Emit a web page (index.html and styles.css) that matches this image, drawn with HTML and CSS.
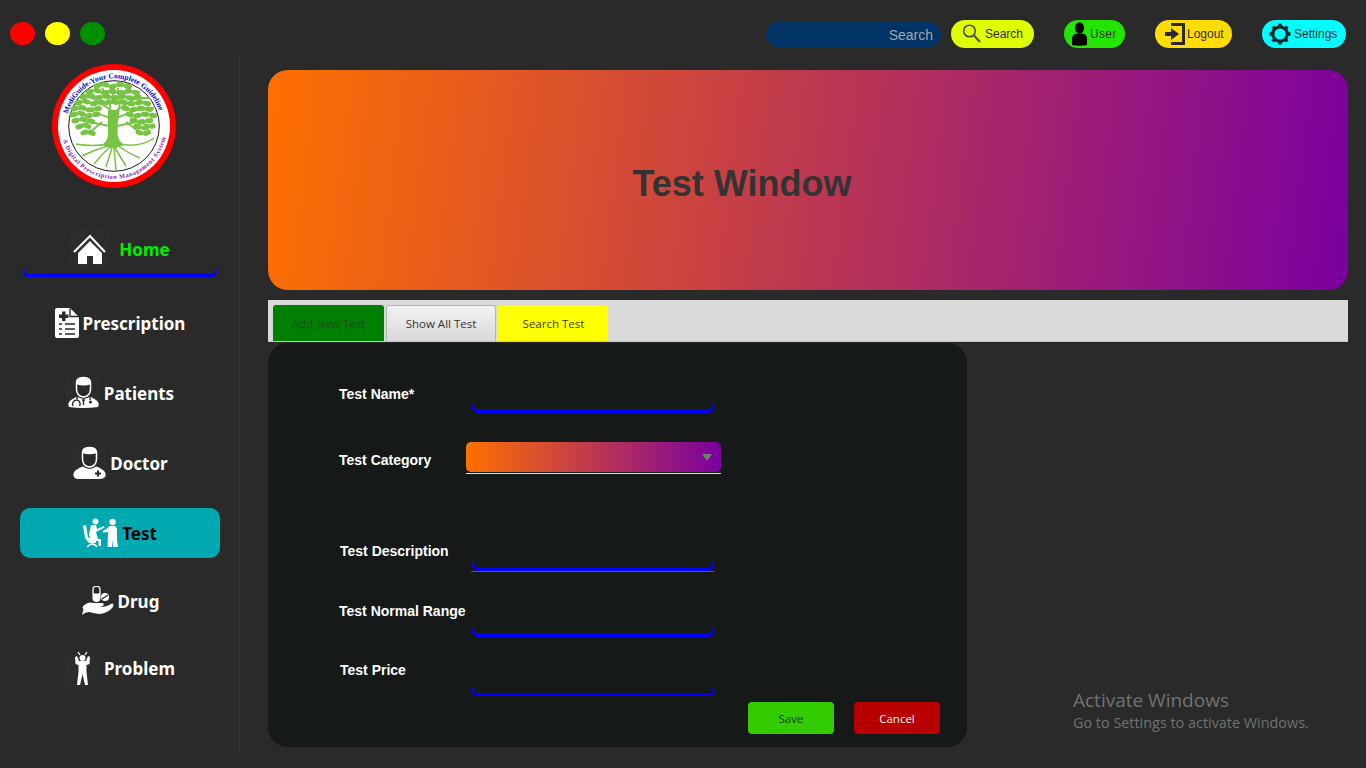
FILE: index.html
```html
<!DOCTYPE html>
<html lang="en">
<head>
<meta charset="utf-8">
<title>Test Window</title>
<link rel="stylesheet" href="styles.css">
</head>
<body>
<div class="app">
  <header class="topbar">
    <div class="lights">
      <span class="light light-red"></span>
      <span class="light light-yellow"></span>
      <span class="light light-green"></span>
    </div>
    <div class="tools">
      <input class="search-input" type="text" placeholder="Search">
      <button class="tool tool-search">
        <svg class="tool-icon" width="20" height="22" viewBox="0 0 20 22"><circle cx="7.500" cy="8" r="5.800" fill="none" stroke="#444" stroke-width="1.500"/><path d="M12 12.500L18 19" stroke="#555" stroke-width="2.200"/></svg>
        <span>Search</span>
      </button>
      <button class="tool tool-user">
        <svg class="tool-icon" width="17" height="24" viewBox="0 0 17 24"><ellipse cx="8.500" cy="6" rx="4.600" ry="5.800" fill="#000"/><path d="M1 23V17Q1 12 6 11.500H11Q16 12 16 17V23Q8.500 24.500 1 23Z" fill="#000"/></svg>
        <span>User</span>
      </button>
      <button class="tool tool-logout">
        <svg class="tool-icon" width="22" height="24" viewBox="0 0 22 24"><path d="M6 1H20V23H6V20H17V4H6Z" fill="#2a2a2a"/><path d="M0 10H6V6L14 12L6 18V14H0Z" fill="#2a2a2a"/></svg>
        <span>Logout</span>
      </button>
      <button class="tool tool-settings">
        <svg class="tool-icon" width="22" height="24" viewBox="0 0 22 24"><circle cx="11" cy="12" r="7.200" fill="none" stroke="#14282c" stroke-width="3.200"/><path d="M11 1.500V5M11 19V22.500M0.500 12H4M18 12H21.500M3.600 4.600L6 7M18.400 4.600L16 7M3.600 19.400L6 17M18.400 19.400L16 17" stroke="#14282c" stroke-width="3.400"/></svg>
        <span>Settings</span>
      </button>
    </div>
  </header>

  <div class="body-row">
    <aside class="sidebar">
      <svg class="logo" width="124" height="124" viewBox="0 0 124 124">
        <defs>
          <path id="arcTop" d="M16 50A47.500 47.500 0 0 1 108 50"/>
          <path id="arcBottom" d="M11 76A52.900 52.900 0 0 0 113 76"/>
        </defs>
        <circle cx="62" cy="62" r="62" fill="#ff0000"/>
        <circle cx="62" cy="62" r="56" fill="#ffffff"/>
        <circle cx="62" cy="62" r="45.300" fill="#ffffff" stroke="#000" stroke-width="0.900"/>
        <text class="logo-top"><textPath href="#arcTop" textLength="122" lengthAdjust="spacing">MediGuide-Your Complete Guideline</textPath></text>
        <text class="logo-bottom"><textPath href="#arcBottom" textLength="140" lengthAdjust="spacing">A Digital Prescription Management System</textPath></text>
        <path class="tree-wood" d="M56 46H66L65.500 70Q66 77 72 81L64 84H59L50 81Q56 77 56 70Z"/>
        <g class="tree-branch">
          <path d="M59 56L58 38L50 24M59 46L40 34L28 32M58 54L36 46L22 44M57 62L38 58L26 62M65 58L68 38L76 24M65 46L84 34L98 34M65 54L84 46L102 44M65 62L84 58L100 62M60 40L62 20M67 40L66 24M50 58L36 70M74 58L90 70"/>
        </g>
        <g class="tree-root">
          <path d="M56 80Q40 83 24 80M56 82Q42 86 30 92M58 83Q50 90 42 100M60 84L54 103M62 84L64 106M63 84L74 102M66 82Q78 90 88 94M68 80Q88 84 102 74"/>
        </g>
        <g class="tree-leaf">
          <path d="M44 22L52 20L60 23L68 20L78 23"/>
          <path d="M36 28L44 26L52 29L60 27L68 29L76 27L86 29"/>
          <path d="M30 33L38 31L46 34L54 32L62 34L70 32L78 34L92 33"/>
          <path d="M25 39L33 37L41 40L50 38M54 39L60 37L66 39M70 38L80 40L88 38L98 40"/>
          <path d="M21 45L29 43L37 46L50 44M72 44L80 46L88 44L102 46"/>
          <path d="M20 51L28 49L36 52L46 50M76 50L84 52L92 50L104 52"/>
          <path d="M22 57L30 55L42 58M80 56L88 58L102 56"/>
          <path d="M26 63L33 61L40 64M84 62L92 64L101 62"/>
          <path d="M31 69L36 67L42 70M86 68L92 70L97 68"/>
        </g>
      </svg>

      <nav class="nav">
        <a class="nav-item nav-home">
          <svg class="nav-icon hatch" width="40" height="40" viewBox="0 0 40 40"><path class="ic" d="M8 24L20 12L32 24V35H23V27H17V35H8Z"/><path class="ic-line" d="M4 23L20 7L35 23"/></svg>
          <span class="nav-label">Home</span>
        </a>
        <a class="nav-item">
          <svg class="nav-icon" width="24" height="30" viewBox="0 0 24 30"><path class="ic" d="M2 0H15L24 9V28A2 2 0 0 1 22 30H2A2 2 0 0 1 0 28V2A2 2 0 0 1 2 0Z"/><path class="ic-cut" d="M4 6.500H7V3.500H10.500V6.500H13.500V10H10.500V13H7V10H4Z"/><path class="ic-cut-line" d="M15 0.500V8.500H24M4 16H7M4 21H7M4 26H7M10 16H20M10 21H20M10 26H20"/></svg>
          <span class="nav-label">Prescription</span>
        </a>
        <a class="nav-item">
          <svg class="nav-icon hatch" width="34" height="34" viewBox="0 0 34 34"><path class="ic" d="M3 31Q1 27 5 24Q9 21 14 19.500H21Q26 21 30 24Q34 27 32 31Q17.500 33 3 31Z"/><path class="ic-cut-line ic-neck" d="M10.500 19.500Q17.500 25 24.500 19.500"/><path class="ic-face" d="M10.500 7Q10.500 1.500 17.500 1.500Q24.500 1.500 24.500 7V13Q24.500 20 17.500 21Q10.500 20 10.500 13Z"/><path class="ic" d="M10 8Q10 1 17.500 1Q25 1 25 8Q17.500 11 10 8Z"/><path class="ic-cut-line" d="M11 21V24M7 30Q5.500 27.500 8.500 24.500Q11 23.500 13 25Q15 27.500 13.500 30M24 21V24M17.500 23.500V29M16 24H19"/><circle class="ic-cut" cx="24.500" cy="26" r="1.500"/></svg>
          <span class="nav-label">Patients</span>
        </a>
        <a class="nav-item">
          <svg class="nav-icon hatch" width="34" height="34" viewBox="0 0 34 34"><path class="ic" d="M2 31Q0 27 4 24Q8 21 13 19.500H22Q27 21 31 24Q35 27 33 31Q31 33 28 33H6Q3 33 2 31Z"/><path class="ic-cut-line ic-neck" d="M10.500 19.500Q17.500 25 24.500 19.500"/><path class="ic-face" d="M10.500 7Q10.500 1.500 17.500 1.500Q24.500 1.500 24.500 7V13Q24.500 20 17.500 21Q10.500 20 10.500 13Z"/><path class="ic" d="M10 7Q10 1 17.500 1Q25 1 25 7Q17.500 9.500 10 7Z"/><path class="ic-cut" d="M23 26.500H25V24.500H27V26.500H29V28.500H27V30.500H25V28.500H23Z"/></svg>
          <span class="nav-label">Doctor</span>
        </a>
        <a class="nav-item nav-active">
          <svg class="nav-icon" width="36" height="30" viewBox="0 0 36 30"><circle class="ic" cx="12.500" cy="3.500" r="3"/><path class="ic" d="M8 7L13 7L14 11L21 8L21.500 9.500L13 14L15 21H18V28H15.500V23H8L6 16Z"/><path class="ic" d="M0 8L3 7L5 19L13 23V25H6L2 20Z"/><path class="ic-line-thin" d="M4 29Q7 26 9 26Q12 26 14 29M9 24V27"/><circle class="ic" cx="29.500" cy="4" r="3.200"/><path class="ic" d="M26 8H32Q34 9 34 12V22L35 29H30L29.500 21L29 29H24.500L25 14L20 14.500L19.500 13L25 10Z"/></svg>
          <span class="nav-label">Test</span>
        </a>
        <a class="nav-item">
          <svg class="nav-icon" width="33" height="30" viewBox="0 0 33 30"><path class="ic-line-thin" d="M12 8V3.500A3.500 3.500 0 0 1 19 3.500V8"/><path class="ic" d="M11.500 7.500H19.500V12A4 4 0 0 1 11.500 12Z"/><circle class="ic" cx="24" cy="11" r="4"/><path class="ic-cut-line" d="M21 13L27 9"/><path class="ic" d="M1 29L2.500 23Q0 21 4 18.500Q8 15.500 13 17H21Q24 17 22 20H18Q24 22 28 19L31 17.500Q33.500 18 32 21Q26 28 18 28Q12 27 8 26Q4 26 1 29Z"/></svg>
          <span class="nav-label">Drug</span>
        </a>
        <a class="nav-item">
          <svg class="nav-icon hatch" width="35" height="35" viewBox="0 0 35 35"><circle class="ic" cx="17.500" cy="7" r="3"/><path class="ic" d="M10 6L12 5L14 10H21L23 5L25 6L24.500 13L21.500 14V21L23 34H20L17.500 23L15 34H12L13.500 21V14L10.500 13Z"/><path class="ic-line-thin" d="M13 1L15 4M22 1L20 4"/></svg>
          <span class="nav-label">Problem</span>
        </a>
      </nav>
    </aside>

    <main class="main">
      <section class="banner"><h1 class="banner-title">Test Window</h1></section>

      <div class="tabs">
        <button class="tab tab-green">Add New Test</button>
        <button class="tab tab-grey">Show All Test</button>
        <button class="tab tab-yellow">Search Test</button>
      </div>

      <form class="panel">
        <label class="field-label">Test Name*</label>
        <div class="field field-name"><input class="field-input" type="text"></div>

        <label class="field-label field-label-tall">Test Category</label>
        <div class="combo">
          <div class="combo-box">
            <svg width="12" height="7" viewBox="0 0 12 7"><path d="M1 0H11L6 7Z" fill="#6c7f6c"/></svg>
          </div>
        </div>

        <label class="field-label field-label-nudge">Test Description</label>
        <div class="field field-desc"><input class="field-input" type="text"></div>

        <label class="field-label">Test Normal Range</label>
        <div class="field field-range"><input class="field-input" type="text"></div>

        <label class="field-label field-label-nudge">Test Price</label>
        <div class="field field-price"><input class="field-input" type="text"></div>

        <div class="actions">
          <button class="btn btn-save" type="button">Save</button>
          <button class="btn btn-cancel" type="button">Cancel</button>
        </div>
      </form>
    </main>
  </div>

  <div class="watermark">
    <div class="wm-title">Activate Windows</div>
    <div class="wm-sub">Go to Settings to activate Windows.</div>
  </div>
</div>
</body>
</html>
```
FILE: styles.css
```css
* { box-sizing: border-box; }
html, body { margin: 0; padding: 0; }
body {
  width: 1366px;
  height: 768px;
  overflow: hidden;
  background: #2a2a2a;
  font-family: "Liberation Sans", Arial, sans-serif;
}
.app { position: relative; width: 1366px; height: 768px; }

/* top bar */
.topbar {
  height: 54px;
  display: flex;
  justify-content: space-between;
  padding: 20px 20px 0 10px;
}
.lights { display: flex; gap: 10px; padding-top: 2px; }
.light { width: 25px; height: 23px; border-radius: 50%; }
.light-red { background: #ff0000; }
.light-yellow { background: #ffff00; }
.light-green { background: #009000; }

.tools { display: flex; align-items: flex-start; }
.search-input {
  width: 175px;
  height: 25px;
  margin: 2px 10px 0 0;
  padding: 0 8px;
  border: 0;
  border-radius: 13px;
  background: #003366;
  color: #a6a6a6;
  text-align: right;
  font: 14px "Liberation Sans", Arial, sans-serif;
  outline: none;
}
.search-input::placeholder { color: #a6a6a6; opacity: 1; }
.tool {
  height: 28px;
  margin: 0;
  padding: 0;
  border: 0;
  border-radius: 14px;
  display: flex;
  align-items: center;
  color: #2e2e2e;
  font: 12px "Liberation Sans", Arial, sans-serif;
}
.tool-search { width: 83px; background: #dfff00; padding-left: 11px; gap: 3px; margin-right: 30px; }
.tool-user { width: 61px; background: #22e600; padding-left: 7px; gap: 2px; margin-right: 30px; letter-spacing: 0.3px; }
.tool-logout { width: 77px; background: #ffdd00; padding-left: 10px; gap: 0; margin-right: 30px; }
.tool-settings { width: 84px; background: #00ffff; padding-left: 7px; gap: 3px; }
.tool-icon { flex: none; }

/* page body */
.body-row { display: flex; height: 702px; }
.sidebar {
  width: 240px;
  height: 701px;
  border-right: 1px solid #6d1650;
  padding: 10px 19px 0 20px;
  display: flex;
  flex-direction: column;
  align-items: center;
}
.logo { flex: none; margin-right: 12px; }
.logo-top { font: bold 7.500px "Liberation Serif", serif; fill: #0000e6; }
.logo-bottom { font: bold 6.200px "Liberation Serif", serif; fill: #8a12b0; }
.tree-wood { fill: #76c442; }
.tree-branch { fill: none; stroke: #76c442; stroke-width: 1.800; }
.tree-root { fill: none; stroke: #76c442; stroke-width: 1.500; }
.tree-leaf {
  fill: none;
  stroke: #76c442;
  stroke-width: 5;
  stroke-linecap: round;
  stroke-dasharray: 3.200 4.800;
}

.nav {
  width: 200px;
  margin-top: 37px;
  display: grid;
  grid-template-rows: 73px 70px 70px 70px 68px 67px 50px;
}
.nav-item {
  height: 50px;
  display: flex;
  align-items: center;
  justify-content: center;
  gap: 4px;
  border-radius: 10px;
  color: #ffffff;
  font: 700 17px "Noto Sans", "Open Sans", sans-serif;
}
.nav-label { display: block; }
.nav-icon { flex: none; }
.hatch {
  background: repeating-linear-gradient(135deg, #303030 0 1px, #2a2a2a 1px 3px);
}
.ic { fill: #ffffff; }
.ic-face { fill: #2a2a2a; stroke: #ffffff; stroke-width: 1.500; }
.ic-neck { fill: #2a2a2a; }
.ic-line { fill: none; stroke: #ffffff; stroke-width: 2.200; }
.ic-line-thin { fill: none; stroke: #ffffff; stroke-width: 1.300; }
.ic-cut { fill: #2a2a2a; }
.ic-cut-line { fill: none; stroke: #2a2a2a; stroke-width: 1.400; }

.nav-home {
  position: relative;
  height: 53px;
  width: 194px;
  margin-left: 3px;
  padding-bottom: 5px;
  gap: 9px;
  color: #00ee00;
}
.nav-home::after {
  content: "";
  position: absolute;
  left: 0;
  right: 0;
  bottom: 1px;
  height: 5px;
  border: solid #0000ff;
  border-width: 0 2px 3px;
  border-radius: 0 0 5px 5px;
}
.nav-active { background: #00a8b0; color: #000000; gap: 3px; }
.nav-active .ic-cut-line { stroke: #00a8b0; }

/* main column */
.main { width: 1080px; margin-left: 28px; padding-top: 16px; }
.banner {
  height: 220px;
  border-radius: 20px;
  padding: 8px 132px 0 0;
  display: flex;
  align-items: center;
  justify-content: center;
  background: linear-gradient(97deg, #ff7000 0%, #7a00a0 100%);
}
.banner-title {
  margin: 0;
  color: #333333;
  font: bold 36px "Liberation Sans", Arial, sans-serif;
}

.tabs {
  height: 42px;
  margin-top: 10px;
  padding: 5px 0 0 5px;
  display: flex;
  gap: 2px;
  background: #d9d9d9;
  border-bottom: 1px solid #c4c4c4;
}
.tab {
  width: 110px;
  height: 36px;
  margin: 0;
  padding: 0;
  border: 0;
  border-radius: 3px 3px 0 0;
  font: 11.500px "Open Sans", sans-serif;
  color: #333333;
}
.tab-green { width: 111px; background: #008000; color: #1e4e24; }
.tab-grey {
  background: linear-gradient(#f2f2f2, #d9d9d9);
  border: 1px solid #b5b5b5;
  border-bottom: 0;
}
.tab-yellow { width: 111px; background: #ffff00; margin-left: -1px; padding-left: 2px; color: #3f3f10; }

.panel {
  width: 699px;
  height: 404px;
  margin-top: 1px;
  padding: 35px 27px 0 71px;
  border-radius: 20px;
  background: #151917;
  display: grid;
  grid-template-columns: 132px 243px 1fr;
  grid-template-rows: 64px 93px 60px 59px 48px 32px;
  align-items: start;
}
.field-label {
  grid-column: 1;
  color: #ffffff;
  font: bold 14px/32px "Liberation Sans", Arial, sans-serif;
  white-space: nowrap;
}
.field-label-tall { line-height: 36px; }
.field-label-nudge { padding-left: 1px; }

.field { position: relative; grid-column: 2; width: 243px; }
.field::after {
  content: "";
  position: absolute;
  left: 1px;
  right: 0;
  bottom: 0;
  height: 6px;
  border: solid #0000ff;
  border-width: 0 2px 4px;
  border-radius: 0 0 6px 6px;
}
.field-input {
  display: block;
  width: 100%;
  height: 100%;
  padding: 0;
  border: 0;
  background: transparent;
  outline: none;
}
.field-name { height: 35px; }
.field-desc { height: 36px; box-shadow: 0 1px 0 #5a5a5a; }
.field-range { height: 42px; }
.field-price { height: 42px; }
.field-price::after { height: 5px; border-bottom-width: 3px; border-radius: 0 0 5px 5px; }

.combo {
  grid-column: 2;
  width: 255px;
  margin-left: -5px;
  height: 32px;
  border-bottom: 1px solid #e8e8a8;
}
.combo-box {
  height: 30px;
  border-radius: 5px;
  padding-right: 8px;
  display: flex;
  align-items: center;
  justify-content: flex-end;
  background: linear-gradient(90deg, #ff7000 0%, #7a00a0 100%);
}

.actions {
  grid-column: 1 / -1;
  grid-row: 6;
  display: flex;
  justify-content: flex-end;
  gap: 20px;
}
.btn {
  width: 86px;
  height: 32px;
  margin: 0;
  padding: 0;
  border: 0;
  border-radius: 4px;
  font: 11.500px "Open Sans", sans-serif;
}
.btn-save { background: #33cc00; color: #1a3a10; }
.btn-cancel { background: #b80000; color: #ffffff; }

/* overlay */
.watermark {
  position: absolute;
  left: 1073px;
  top: 688px;
  color: #727272;
  font-family: "Open Sans", sans-serif;
}
.wm-title { font-size: 19px; line-height: 25px; }
.wm-sub { font-size: 14.400px; line-height: 20px; }
```
